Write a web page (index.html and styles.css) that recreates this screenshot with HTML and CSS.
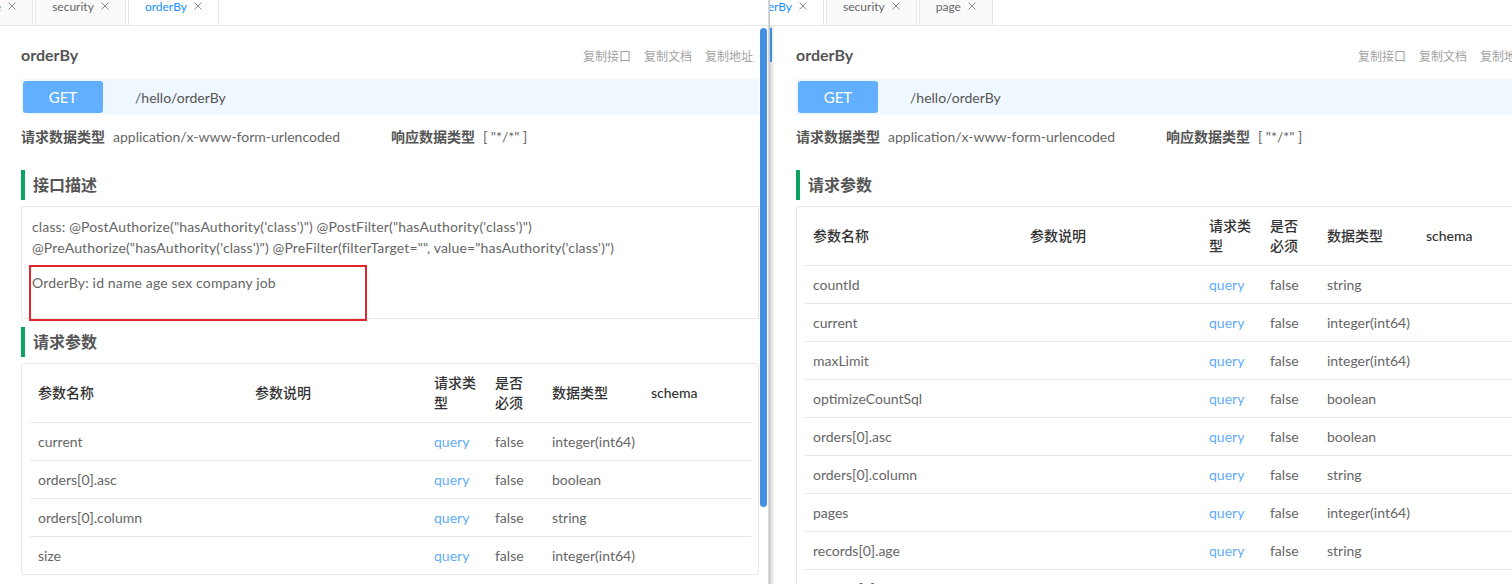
FILE: index.html
```html
<!DOCTYPE html>
<html lang="zh-CN">
<head>
<meta charset="utf-8">
<title>orderBy</title>
<link rel="stylesheet" href="styles.css">
</head>
<body>
<div class="screen">
  <section class="window window-left">
    <div class="tabbar">
      <div class="tabstrip tabstrip-left">
        <div class="tab"><span class="tab-text">page</span><svg class="tab-close" viewBox="0 0 8 8"><path d="M0.5 0.5L7.5 7.5M7.5 0.5L0.5 7.5"/></svg></div>
        <div class="tab"><span class="tab-text">security</span><svg class="tab-close" viewBox="0 0 8 8"><path d="M0.5 0.5L7.5 7.5M7.5 0.5L0.5 7.5"/></svg></div>
        <div class="tab active"><span class="tab-text">orderBy</span><svg class="tab-close" viewBox="0 0 8 8"><path d="M0.5 0.5L7.5 7.5M7.5 0.5L0.5 7.5"/></svg></div>
      </div>
    </div>
    <div class="window-body">
      <div class="doc">
        <div class="title-row">
          <h1 class="api-title">orderBy</h1>
          <div class="actions"><span>复制接口</span><span>复制文档</span><span>复制地址</span></div>
        </div>
        <div class="method-bar"><span class="method">GET</span><span class="path">/hello/orderBy</span></div>
        <div class="types">
          <div class="type-item"><span class="type-label">请求数据类型</span><span class="type-value">application/x-www-form-urlencoded</span></div>
          <div class="type-item"><span class="type-label">响应数据类型</span><span class="type-value">[ "*/*" ]</span></div>
        </div>
        <h2 class="section-title">接口描述</h2>
        <div class="desc">
          <p class="desc-line">class: @PostAuthorize("hasAuthority('class')") @PostFilter("hasAuthority('class')")<br>@PreAuthorize("hasAuthority('class')") @PreFilter(filterTarget="", value="hasAuthority('class')")</p>
          <p class="desc-line desc-order">OrderBy: id name age sex company job</p>
          <div class="annotation"></div>
        </div>
        <h2 class="section-title section-params">请求参数</h2>
        <div class="table-box">
          <table class="params">
            <colgroup><col class="c1"><col class="c2"><col class="c3"><col class="c4"><col class="c5"><col class="c6"></colgroup>
            <thead><tr><th>参数名称</th><th>参数说明</th><th>请求类型</th><th>是否必须</th><th>数据类型</th><th>schema</th></tr></thead>
            <tbody>
              <tr><td>current</td><td></td><td class="q">query</td><td>false</td><td>integer(int64)</td><td></td></tr>
              <tr><td>orders[0].asc</td><td></td><td class="q">query</td><td>false</td><td>boolean</td><td></td></tr>
              <tr><td>orders[0].column</td><td></td><td class="q">query</td><td>false</td><td>string</td><td></td></tr>
              <tr class="last"><td>size</td><td></td><td class="q">query</td><td>false</td><td>integer(int64)</td><td></td></tr>
            </tbody>
          </table>
        </div>
      </div>
      <div class="scrollbar"><div class="thumb"></div></div>
    </div>
  </section>
  <div class="divider"></div>
  <section class="window window-right">
    <div class="tabbar">
      <div class="tabstrip tabstrip-right">
        <div class="tab active"><span class="tab-text">orderBy</span><svg class="tab-close" viewBox="0 0 8 8"><path d="M0.5 0.5L7.5 7.5M7.5 0.5L0.5 7.5"/></svg></div>
        <div class="tab"><span class="tab-text">security</span><svg class="tab-close" viewBox="0 0 8 8"><path d="M0.5 0.5L7.5 7.5M7.5 0.5L0.5 7.5"/></svg></div>
        <div class="tab"><span class="tab-text">page</span><svg class="tab-close" viewBox="0 0 8 8"><path d="M0.5 0.5L7.5 7.5M7.5 0.5L0.5 7.5"/></svg></div>
      </div>
    </div>
    <div class="window-body">
      <div class="edge"><div class="edge-mark"></div></div>
      <div class="doc">
        <div class="title-row">
          <h1 class="api-title">orderBy</h1>
          <div class="actions"><span>复制接口</span><span>复制文档</span><span>复制地址</span></div>
        </div>
        <div class="method-bar"><span class="method">GET</span><span class="path">/hello/orderBy</span></div>
        <div class="types">
          <div class="type-item"><span class="type-label">请求数据类型</span><span class="type-value">application/x-www-form-urlencoded</span></div>
          <div class="type-item"><span class="type-label">响应数据类型</span><span class="type-value">[ "*/*" ]</span></div>
        </div>
        <h2 class="section-title">请求参数</h2>
        <div class="table-box">
          <table class="params">
            <colgroup><col class="c1"><col class="c2"><col class="c3"><col class="c4"><col class="c5"><col class="c6"></colgroup>
            <thead><tr><th>参数名称</th><th>参数说明</th><th>请求类型</th><th>是否必须</th><th>数据类型</th><th>schema</th></tr></thead>
            <tbody>
              <tr><td>countId</td><td></td><td class="q">query</td><td>false</td><td>string</td><td></td></tr>
              <tr><td>current</td><td></td><td class="q">query</td><td>false</td><td>integer(int64)</td><td></td></tr>
              <tr><td>maxLimit</td><td></td><td class="q">query</td><td>false</td><td>integer(int64)</td><td></td></tr>
              <tr><td>optimizeCountSql</td><td></td><td class="q">query</td><td>false</td><td>boolean</td><td></td></tr>
              <tr><td>orders[0].asc</td><td></td><td class="q">query</td><td>false</td><td>boolean</td><td></td></tr>
              <tr><td>orders[0].column</td><td></td><td class="q">query</td><td>false</td><td>string</td><td></td></tr>
              <tr><td>pages</td><td></td><td class="q">query</td><td>false</td><td>integer(int64)</td><td></td></tr>
              <tr><td>records[0].age</td><td></td><td class="q">query</td><td>false</td><td>string</td><td></td></tr>
              <tr><td>records[0].company</td><td></td><td class="q">query</td><td>false</td><td>string</td><td></td></tr>
            </tbody>
          </table>
        </div>
      </div>
    </div>
  </section>
</div>
</body>
</html>
```

FILE: styles.css
```css
* { box-sizing: border-box; }
html, body { margin: 0; padding: 0; background: #fff; }
body {
  font-family: Lato, "Noto Sans CJK SC", sans-serif;
  font-size: 14px;
  color: #555;
  width: 1512px;
  height: 584px;
  overflow: hidden;
}
.screen { display: flex; width: 1512px; height: 584px; overflow: hidden; }

.window { display: flex; flex-direction: column; height: 584px; overflow: hidden; background: #fff; }
.window-left { width: 768px; flex: none; }
.window-right { flex: 1; min-width: 0; }
.divider { width: 2px; flex: none; background: linear-gradient(to right, #e2e2e2, #bdbdbd); }

/* tabs */
.tabbar { height: 26px; flex: none; border-bottom: 1px solid #e6e6e6; overflow: hidden; }
.tabstrip { display: flex; gap: 2px; height: 26px; }
.tabstrip-left { margin-left: -41px; }
.tabstrip-right { margin-left: -37px; }
.tab {
  display: flex; align-items: flex-start; flex: none;
  height: 26px; padding: 0 16px 0 16px;
  background: #fafafa; border: 1px solid #e6e6e6; border-top: none;
  font-size: 12px; line-height: 13px; color: #666;
}
.tab.active { background: #fff; border-bottom-color: #fff; color: #1890ff; }
.tab-close { width: 8px; height: 8px; margin: 2px 0 0 7px; fill: none; stroke: #8c8c8c; stroke-width: 1; }

/* body */
.window-body { display: flex; flex: 1; min-height: 0; }
.doc { width: 760px; flex: none; padding: 0 1px 0 21px; }
.edge { width: 5px; flex: none; position: relative; background: linear-gradient(to right, #d6d6d6, #f4f4f4 70%, #fff); }
.edge-mark { position: absolute; left: 0; top: 2px; width: 2px; height: 34px; background: #3d8fe3; }

.scrollbar { width: 8px; flex: none; position: relative; }
.thumb { position: absolute; left: 0; top: 2px; width: 7px; height: 479px; border-radius: 4px; background: #4690e3; }

.title-row { display: flex; justify-content: space-between; align-items: center; height: 53px; padding: 17px 6px 12px 0; }
.api-title { margin: 0; font-size: 16px; font-weight: 700; color: #555; line-height: 24px; }
.actions { display: flex; gap: 13px; font-size: 12px; color: #a3a3a3; }

.method-bar { display: flex; align-items: center; height: 36px; padding: 2px; background: #eff7ff; }
.method {
  width: 80px; height: 32px; border-radius: 3px; background: #61affe; color: #fff;
  display: flex; align-items: center; justify-content: center; font-size: 15px;
}
.path { margin-left: 32px; font-size: 14px; color: #555; }

.types { display: grid; grid-template-columns: 370px 1fr; margin-top: 12px; line-height: 20px; }
.type-label { font-size: 14px; font-weight: 700; color: #555; margin-right: 8px; }
.type-value { font-size: 14px; color: #666; }

.section-title {
  margin: 23px 0 6px; height: 30px; line-height: 30px;
  border-left: 4px solid #0ba360; padding-left: 8px;
  font-size: 16px; font-weight: 600; color: #555;
}
.section-params { margin-top: 8px; }

.desc { position: relative; border: 1px solid #e8e8e8; height: 113px; padding: 9px 10px 0; font-size: 14px; color: #666; line-height: 21px; letter-spacing: 0.15px; }
.desc-line { margin: 0; }
.desc-order { margin-top: 14px; }
.annotation { position: absolute; left: 7px; top: 58px; width: 338px; height: 56px; border: 2px solid #e3262b; }

.table-box { border: 1px solid #e8e8e8; border-radius: 4px; padding: 0 8px; }
.params { width: 100%; table-layout: fixed; border-collapse: separate; border-spacing: 0; }
.c1 { width: 217px; } .c2 { width: 179px; } .c3 { width: 61px; } .c4 { width: 57px; } .c5 { width: 99px; } .c6 { width: 108px; }
.params th, .params td { padding: 0 8px; text-align: left; vertical-align: middle; border-bottom: 1px solid #e8e8e8; }
.params th { height: 59px; font-size: 14px; font-weight: 500; color: #333; line-height: 20px; }
.params td { height: 38px; font-size: 14px; color: #666; line-height: 20px; white-space: nowrap; }
.params tr.last td { border-bottom: none; height: 37px; }
.params td.q { color: #5fabf8; }
```
